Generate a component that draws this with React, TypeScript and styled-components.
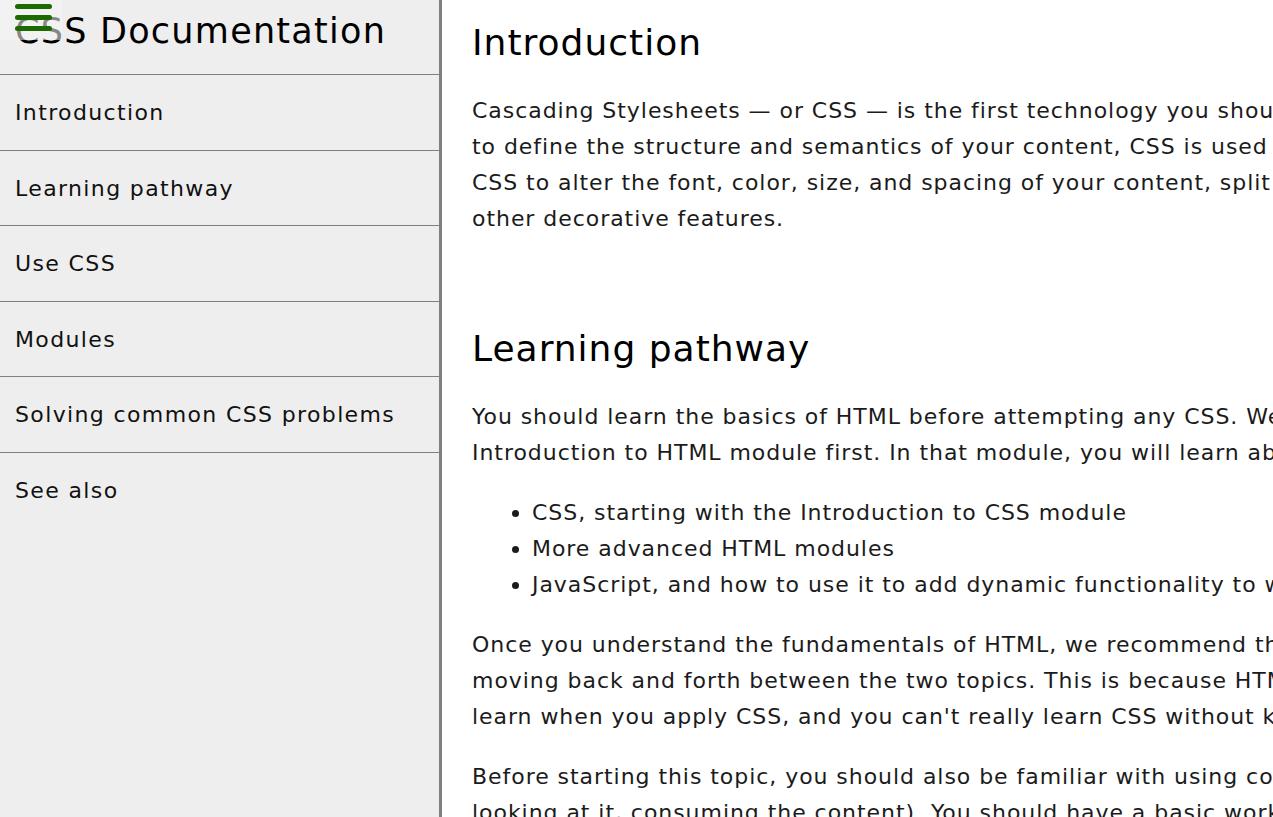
import React from "react";
import styled, { createGlobalStyle } from "styled-components";

const FONT = `"DejaVu Sans", "Liberation Sans", sans-serif`;

const Global = createGlobalStyle`
  html, body { margin: 0; padding: 0; background: #fff; overflow: hidden; }
  body { font-family: ${FONT}; color: #1b1b1b; }
  * { box-sizing: border-box; }
`;

const Page = styled.div`
  display: flex;
  width: 100vw;
  height: 100vh;
  overflow: hidden;
`;

const Sidebar = styled.nav`
  position: relative;
  flex: 0 0 442px;
  background: #eeeeee;
  border-right: 3px solid #7f7f7f;
  height: 100%;
`;

const SideHeader = styled.header`
  height: 75px;
  padding: 9px 0 0 15px;
  border-bottom: 1px solid #808080;
  font-size: 35px;
  line-height: 44px;
  letter-spacing: 1.25px;
  color: #000;
  font-weight: 400;
  white-space: nowrap;
`;

const MenuButton = styled.button`
  position: absolute;
  top: 0;
  left: 0;
  width: 62px;
  height: 40px;
  padding: 4px 0 0 15px;
  border: none;
  background: rgba(245, 245, 245, 0.55);
  display: flex;
  flex-direction: column;
  gap: 6px;
  cursor: pointer;
`;

const Bar = styled.span`
  display: block;
  width: 37px;
  height: 5px;
  border-radius: 3px;
  background: #1c6a00;
`;

const NavList = styled.ul`
  list-style: none;
  margin: 0;
  padding: 0;
`;

const NavItem = styled.li`
  height: 75.5px;
  display: flex;
  align-items: center;
  padding: 1px 0 0 15px;
  font-size: 22px;
  letter-spacing: 1.37px;
  color: #111;
  &:not(:last-child) { border-bottom: 1px solid #808080; }
`;

const Main = styled.main`
  flex: 1 1 auto;
  min-width: 0;
  overflow: hidden;
  padding-left: 30px;
`;

const Section = styled.section`
  padding-top: 20px;
  margin-bottom: 69px;
`;

const Heading = styled.h2`
  margin: 0 0 27px;
  font-size: 36px;
  line-height: 46px;
  font-weight: 400;
  letter-spacing: 1px;
  color: #000;
  white-space: nowrap;
`;

const Para = styled.p`
  margin: 0 0 24px;
  font-size: 22px;
  line-height: 36px;
  letter-spacing: 0.95px;
  color: #1b1b1b;
  white-space: nowrap;
`;

const Bullets = styled.ul`
  margin: 0 0 24px;
  padding-left: 60px;
  font-size: 22px;
  line-height: 36px;
  letter-spacing: 0.95px;
  color: #1b1b1b;
  white-space: nowrap;
`;

const nav = [
  "Introduction",
  "Learning pathway",
  "Use CSS",
  "Modules",
  "Solving common CSS problems",
  "See also",
];

export default function App() {
  return (
    <>
      <Global />
      <Page>
        <Sidebar>
          <SideHeader>CSS Documentation</SideHeader>
          <MenuButton aria-label="menu">
            <Bar />
            <Bar />
            <Bar />
          </MenuButton>
          <NavList>
            {nav.map((n) => (
              <NavItem key={n}>{n}</NavItem>
            ))}
          </NavList>
        </Sidebar>
        <Main>
          <Section>
            <Heading>Introduction</Heading>
            <Para>
              Cascading Stylesheets — or CSS — is the first technology you should start learning after HTML. While HTML is used
              <br />
              to define the structure and semantics of your content, CSS is used to style it and lay it out. For example, you can use
              <br />
              CSS to alter the font, color, size, and spacing of your content, split it into multiple columns, or add animations and
              <br />
              other decorative features.
            </Para>
          </Section>
          <Section>
            <Heading>Learning pathway</Heading>
            <Para>
              You should learn the basics of HTML before attempting any CSS. We recommend that you work through our
              <br />
              Introduction to HTML module first. In that module, you will learn about:
            </Para>
            <Bullets>
              <li>CSS, starting with the Introduction to CSS module</li>
              <li>More advanced HTML modules</li>
              <li>JavaScript, and how to use it to add dynamic functionality to web pages</li>
            </Bullets>
            <Para>
              Once you understand the fundamentals of HTML, we recommend that you learn HTML and CSS at the same time,
              <br />
              moving back and forth between the two topics. This is because HTML is far more interesting and much more fun to
              <br />
              learn when you apply CSS, and you can't really learn CSS without knowing HTML.
            </Para>
            <Para>
              Before starting this topic, you should also be familiar with using computers and using the web passively (i.e., just
              <br />
              looking at it, consuming the content). You should have a basic working environment set up as detailed in
            </Para>
          </Section>
        </Main>
      </Page>
    </>
  );
}
